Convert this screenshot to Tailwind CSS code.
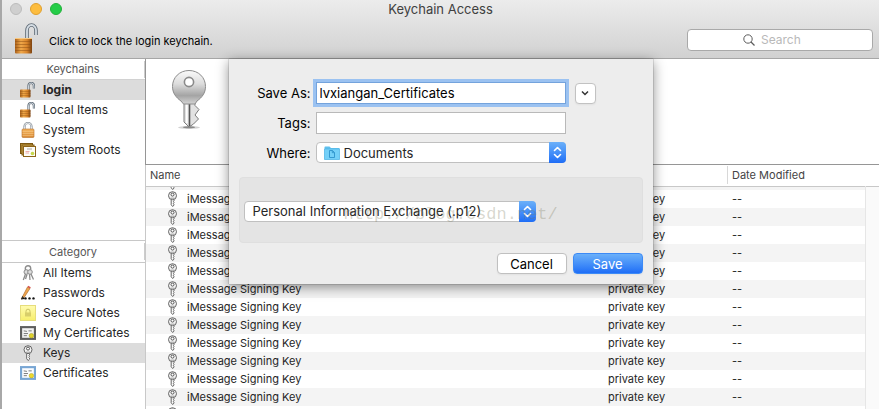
<!DOCTYPE html>
<html lang="en">

<head>
    <meta charset="UTF-8" />
    <meta name="viewport" content="width=device-width, initial-scale=1.0" />
    <title>Keychain Access</title>
    <script src="https://cdn.jsdelivr.net/npm/@tailwindcss/browser@4"></script>
</head>

<body class="h-screen overflow-hidden bg-[#a8a8a8] pl-[2px] font-['Inter','Liberation_Sans',sans-serif] text-[#262626]">

    <!-- shared icons -->
    <svg class="absolute size-0" xmlns="http://www.w3.org/2000/svg" aria-hidden="true">
        <defs>
            <linearGradient id="brass" x1="0" x2="1" y1="0" y2="0">
                <stop offset="0" stop-color="#a9601a" />
                <stop offset=".35" stop-color="#f0a84a" />
                <stop offset=".7" stop-color="#d9852b" />
                <stop offset="1" stop-color="#7c420f" />
            </linearGradient>
            <linearGradient id="gold" x1="0" x2="0" y1="0" y2="1">
                <stop offset="0" stop-color="#f3b55f" />
                <stop offset="1" stop-color="#d98a35" />
            </linearGradient>
            <linearGradient id="silver" x1="0" x2="0" y1="0" y2="1">
                <stop offset="0" stop-color="#fafafa" />
                <stop offset=".4" stop-color="#dcdcdc" />
                <stop offset=".75" stop-color="#a4a4a4" />
                <stop offset="1" stop-color="#d4d4d4" />
            </linearGradient>
            <linearGradient id="note" x1="0" x2="0" y1="0" y2="1">
                <stop offset="0" stop-color="#fffbb0" />
                <stop offset="1" stop-color="#f7ee6c" />
            </linearGradient>
        </defs>

        <symbol id="lock-open" viewBox="0 0 24 32">
            <path d="M13 17V8.500a4.500 5.500 0 0 1 9 0V13" fill="none" stroke="#5f6b76" stroke-width="3.600" />
            <path d="M13 17V8.500a4.500 5.500 0 0 1 9 0V13" fill="none" stroke="#d5dde4" stroke-width="1.800" />
            <rect x="1" y="16" width="17" height="15.500" rx="1" fill="url(#brass)" />
            <path d="M1 19.500h17M1 22.500h17M1 25.500h17M1 28.500h17" stroke="#8a4c12" stroke-opacity=".55" stroke-width=".9" />
            <path d="M1 16.500h17" stroke="#f8c880" stroke-width="1" />
        </symbol>

        <symbol id="lock-open-small" viewBox="0 0 16 16">
            <path d="M8.500 8V4a2.700 3 0 0 1 5.400 0V6.500" fill="none" stroke="#5f6b76" stroke-width="2.200" />
            <path d="M8.500 8V4a2.700 3 0 0 1 5.400 0V6.500" fill="none" stroke="#d5dde4" stroke-width=".9" />
            <rect x="0" y="7.500" width="10.500" height="8" rx=".8" fill="url(#brass)" />
            <path d="M0 9.500h10.500M0 11.500h10.500M0 13.500h10.500" stroke="#8a4c12" stroke-opacity=".5" stroke-width=".7" />
        </symbol>

        <symbol id="lock-closed" viewBox="0 0 14 16">
            <path d="M3.500 8V4.500a3.500 3.500 0 0 1 7 0V8" fill="none" stroke="#8a929a" stroke-width="2.200" />
            <path d="M3.500 8V4.500a3.500 3.500 0 0 1 7 0V8" fill="none" stroke="#e4e8ec" stroke-width="1" />
            <rect x="1" y="7" width="12" height="8.500" rx="1" fill="url(#gold)" stroke="#b97128" stroke-width=".6" />
            <path d="M1.500 9.500h11M1.500 11.500h11M1.500 13.500h11" stroke="#f8cf8e" stroke-opacity=".7" stroke-width=".7" />
        </symbol>

        <symbol id="roots" viewBox="0 0 16 14">
            <rect x=".5" y=".5" width="12" height="10" fill="#c79a3a" stroke="#7d5813" />
            <rect x="2" y="2" width="12" height="10" fill="#d9b158" stroke="#7d5813" />
            <rect x="3.500" y="3.500" width="12" height="10" fill="#fdfcf6" stroke="#8d641a" />
            <path d="M7 6h5" stroke="#888" stroke-width=".7" />
            <path d="M5.500 8.500h4M5.500 10h3.500" stroke="#e79a9a" stroke-width=".8" />
            <circle cx="12.500" cy="10.500" r="1.800" fill="#c6d84a" />
        </symbol>

        <symbol id="key" viewBox="0 0 9 16">
            <path d="M3.200 8.500v5.200L4.600 15.500 6 14.200v-1l-.8-.8.800-.9-.6-.8.600-.8V8.500" fill="#fff" stroke="#555" stroke-width=".9" />
            <circle cx="4.500" cy="4.700" r="4" fill="#f4f4f4" stroke="#555" stroke-width=".9" />
            <circle cx="4.500" cy="3.600" r="1.500" fill="#fff" stroke="#444" stroke-width=".9" />
            <path d="M2.500 7.200h4" stroke="#888" stroke-width=".8" />
        </symbol>

        <symbol id="big-key" viewBox="0 0 36 62">
            <ellipse cx="18" cy="58.500" rx="11" ry="1.500" fill="#000" fill-opacity=".18" />
            <ellipse cx="18" cy="58.300" rx="6" ry="1" fill="#000" fill-opacity=".35" />
            <path d="M13 31v22l5 5 4.500-3 5-5-3.500-4 4-5.500-4-4V31z" fill="#e2e2e2" stroke="#7c7c7c" />
            <path d="M18.500 33v24" stroke="#555" stroke-width="1.600" />
            <path d="M15.800 33v21" stroke="#fff" stroke-width="1.600" />
            <path d="M18 1.500c9.500 0 16.500 7 16.500 16 0 6.500-3.500 11-8.500 14.500l-2 3H12.500l-2.500-3C5 28.500 1.500 24 1.500 17.500c0-9 7-16 16.500-16z"
                fill="url(#silver)" stroke="#8c8c8c" />
            <circle cx="18" cy="13" r="4.600" fill="#fff" stroke="#8a8a8a" stroke-width="1.600" />
        </symbol>

        <symbol id="keys" viewBox="0 0 13 16">
            <g fill="none" stroke="#8c8c8c">
                <circle cx="6.500" cy="3.500" r="2.700" stroke-width="1.400" />
                <circle cx="4.800" cy="7" r="2.300" fill="#ddd" />
                <circle cx="8.500" cy="7" r="2.300" fill="#ddd" />
                <path d="M4 9l-2.200 6M5.500 9.500L4 14M8 9.300l.5 5.700M9.500 9l2.500 5.500" stroke-width="1.300" />
            </g>
        </symbol>

        <symbol id="pencil" viewBox="0 0 16 15">
            <path d="M1.500 13L7.500 1.500 10 3 4 12.200z" fill="#f0a54e" stroke="#a05f24" stroke-width=".6" />
            <path d="M7.500 1.500L8.300.3l2.500 1.400L10 3z" fill="#d8504a" />
            <path d="M1.500 13l.6-2.600 2 1.700z" fill="#333" />
            <path d="M1 13.500l3.500-.7" stroke="#111" stroke-width="1.200" />
            <circle cx="5.500" cy="12.900" r="1.200" fill="#111" />
            <circle cx="9.500" cy="12.900" r="1.200" fill="#111" />
            <circle cx="13.500" cy="12.900" r="1.200" fill="#111" />
        </symbol>

        <symbol id="secure-note" viewBox="0 0 16 16">
            <rect x=".5" y=".5" width="15" height="15" fill="url(#note)" stroke="#e6dd7c" />
            <path d="M6 8V6.200a2 2 0 0 1 4 0V8" fill="none" stroke="#cdc468" />
            <rect x="5" y="7.500" width="6" height="4" fill="#d8ce6a" />
        </symbol>

        <symbol id="cert-dark" viewBox="0 0 15 13">
            <rect x="1" y="1" width="13" height="11" fill="#f2f2f2" stroke="#5e5e5e" stroke-width="2" />
            <path d="M3.500 4.500l3 .5M8 4.500h3M3.500 7h4M3.500 9h3" stroke="#777" stroke-width=".9" />
            <circle cx="10.700" cy="9" r="2.100" fill="#dfd22c" stroke="#a89a18" stroke-width=".5" />
        </symbol>

        <symbol id="cert-blue" viewBox="0 0 15 13">
            <rect x="1" y="1" width="13" height="11" fill="#fafcfe" stroke="#78a6d4" stroke-width="2" />
            <path d="M3.500 4.500l3 .5M8 4.500h3M3.500 7h4M3.500 9h3" stroke="#777" stroke-width=".9" />
            <circle cx="10.700" cy="9" r="2.100" fill="#ecd92c" stroke="#b5a51c" stroke-width=".5" />
        </symbol>

        <symbol id="folder" viewBox="0 0 16 14">
            <path d="M.5 1.200Q.5.500 1.200.5H5.500L7 2h8.500v11.500H.5z" fill="#5fc0ee" />
            <path d="M.5 3h15v10.500H.5z" fill="#74d0f8" stroke="#4fb2e2" stroke-width=".6" />
            <path d="M5.500 4.500h3l2 2V11.500h-5zM8.300 4.700v2h2" fill="none" stroke="#2e93cb" stroke-width=".9" />
        </symbol>

        <symbol id="updown" viewBox="0 0 17 21">
            <path d="M5.500 8.500l3-3 3 3M5.500 12.500l3 3 3-3" fill="none" stroke="#fff" stroke-width="1.600" stroke-linecap="round" stroke-linejoin="round" />
        </symbol>
    </svg>

    <div class="flex h-full flex-col bg-white">

        <!-- title bar -->
        <header class="shrink-0 border-b border-[#a6a6a6] bg-linear-to-b from-[#ececec] to-[#d1d1d1]">
            <div class="grid h-[18px] grid-cols-[1fr_auto_1fr] items-center px-2">
                <div class="flex gap-2">
                    <button aria-label="Close" class="size-3 rounded-full border border-[#bcbcbc] bg-[#cfcfcf]"></button>
                    <button aria-label="Minimize" class="size-3 rounded-full border border-[#e0a02f] bg-[#fdbd3f]"></button>
                    <button aria-label="Zoom" class="size-3 rounded-full border border-[#22b13a] bg-[#24cd48]"></button>
                </div>
                <h1 class="text-[13px] leading-4 text-[#404040]">Keychain Access</h1>
            </div>
            <div class="flex h-10 items-start justify-between pr-[6px] pl-3">
                <div class="flex items-center pt-1">
                    <button aria-label="Lock keychain"><svg class="h-8 w-6"><use href="#lock-open" /></svg></button>
                    <p class="ml-[11px] pt-[6px] text-[11px] leading-4 text-black">Click to lock the login keychain.</p>
                </div>
                <label class="mt-[11px] flex h-[22px] w-[186px] items-center gap-[6px] rounded border border-[#a9a9a9] bg-white pl-[55px]">
                    <svg class="size-3 shrink-0" viewBox="0 0 12 12" fill="none" stroke="#5c5c5c">
                        <circle cx="5" cy="5" r="4.200" />
                        <path d="M8 8l3.500 3.500" stroke-width="1.300" />
                    </svg>
                    <input type="search" aria-label="Search" placeholder="Search"
                        class="w-full min-w-0 text-xs outline-none placeholder:text-[#b9b9b9]" />
                </label>
            </div>
        </header>

        <div class="relative flex min-h-0 flex-1">

            <!-- sidebar -->
            <nav class="flex w-[143px] shrink-0 flex-col text-[12px] leading-5">
                <section class="h-[181px]">
                    <div class="flex h-[21px] items-center border-b border-[#d2d2d2]">
                        <h2 class="flex-1 text-center text-[11px] text-[#555]">Keychains</h2>
                        <span class="h-[17px] w-px bg-[#ccc]"></span>
                    </div>
                    <ul>
                        <li><a href="#" class="flex h-5 items-center bg-[#dcdcdc] font-bold"><span class="flex w-[41px] justify-center pl-[10px]"><svg class="size-4"><use href="#lock-open-small" /></svg></span>login</a></li>
                        <li><a href="#" class="flex h-5 items-center"><span class="flex w-[41px] justify-center pl-[10px]"><svg class="size-4"><use href="#lock-open-small" /></svg></span>Local Items</a></li>
                        <li><a href="#" class="flex h-5 items-center"><span class="flex w-[41px] justify-center pl-[10px]"><svg class="size-4"><use href="#lock-closed" /></svg></span>System</a></li>
                        <li><a href="#" class="flex h-5 items-center"><span class="flex w-[41px] justify-center pl-[10px]"><svg class="size-4"><use href="#roots" /></svg></span>System Roots</a></li>
                    </ul>
                </section>
                <section class="flex-1 border-t border-[#c8c8c8]">
                    <div class="flex h-[22px] items-center border-b border-[#c8c8c8]">
                        <h2 class="flex-1 text-center text-[11px] text-[#555]">Category</h2>
                        <span class="h-[17px] w-px bg-[#ccc]"></span>
                    </div>
                    <ul>
                        <li><a href="#" class="flex h-5 items-center"><span class="flex w-[41px] justify-center pl-[10px]"><svg class="size-4"><use href="#keys" /></svg></span>All Items</a></li>
                        <li><a href="#" class="flex h-5 items-center"><span class="flex w-[41px] justify-center pl-[10px]"><svg class="size-4"><use href="#pencil" /></svg></span>Passwords</a></li>
                        <li><a href="#" class="flex h-5 items-center"><span class="flex w-[41px] justify-center pl-[10px]"><svg class="size-4"><use href="#secure-note" /></svg></span>Secure Notes</a></li>
                        <li><a href="#" class="flex h-5 items-center"><span class="flex w-[41px] justify-center pl-[10px]"><svg class="size-4"><use href="#cert-dark" /></svg></span>My Certificates</a></li>
                        <li><a href="#" class="flex h-5 items-center bg-[#dcdcdc]"><span class="flex w-[41px] justify-center pl-[10px]"><svg class="size-4"><use href="#key" /></svg></span>Keys</a></li>
                        <li><a href="#" class="flex h-5 items-center"><span class="flex w-[41px] justify-center pl-[10px]"><svg class="size-4"><use href="#cert-blue" /></svg></span>Certificates</a></li>
                    </ul>
                </section>
            </nav>

            <!-- item list -->
            <main class="flex min-w-0 flex-1 flex-col">
                <div class="h-[106px] shrink-0 border-b border-l border-[#969696] pt-[10px] pl-[25px]">
                    <svg class="h-[62px] w-9"><use href="#big-key" /></svg>
                </div>
                <div class="min-h-0 flex-1 overflow-hidden border-l border-[#c8c8c8]">
                    <table class="w-full table-fixed text-left text-[11px] leading-[18px]">
                        <colgroup>
                            <col />
                            <col class="w-[125px]" />
                            <col class="w-[138px]" />
                            <col class="w-[14px]" />
                        </colgroup>
                        <thead class="text-[#444]">
                            <tr class="h-[21px] border-b border-[#c8c8c8]">
                                <th class="pl-1 font-normal">Name</th>
                                <th class="pl-[6px] font-normal">Kind</th>
                                <th colspan="2" class="font-normal"><span class="block border-l border-[#d8d8d8] pl-1">Date Modified</span></th>
                            </tr>
                        </thead>
                        <tbody id="items">
                            <tr class="bg-[#f4f4f4]">
                                <td class="pl-[22px]"><div class="flex h-[3px] items-end overflow-hidden"><svg class="h-4 w-[9px] shrink-0"><use href="#key" /></svg></div></td>
                                <td></td>
                                <td></td>
                                <td class="border-l border-[#e6e6e6] bg-[#fafafa]"></td>
                            </tr>
                        </tbody>
                    </table>
                </div>
            </main>

            <!-- save sheet -->
            <div class="pointer-events-none absolute inset-x-0 top-0 flex justify-center">
                <form class="pointer-events-auto w-[424px] bg-[#ededed] px-[10px] pt-[23px] pb-[10px] text-[13px] text-black shadow-[0_3px_12px_rgba(0,0,0,0.45),0_0_1px_rgba(0,0,0,0.6)]">
                    <div class="grid grid-cols-[72px_250px_auto] items-center gap-x-[5px] gap-y-2 leading-4">
                        <label for="save-as" class="text-right">Save As:</label>
                        <input id="save-as" type="text" value="lvxiangan_Certificates"
                            class="h-[22px] border border-[#74a3dc] bg-white px-[3px] ring-3 ring-[#9bc2f1] outline-none" />
                        <button type="button" aria-label="Show more" class="ml-1 flex size-[21px] items-center justify-center rounded border border-[#c2c2c2] bg-white shadow-xs">
                            <svg class="size-2" viewBox="0 0 8 8" fill="none" stroke="#333" stroke-width="1.500"><path d="M1 2.500l3 3 3-3" /></svg>
                        </button>

                        <label for="tags" class="text-right">Tags:</label>
                        <input id="tags" type="text" class="col-span-2 h-[22px] w-[250px] border border-[#b9b9b9] bg-white px-[3px]" />

                        <label for="where" class="text-right">Where:</label>
                        <div class="relative col-span-2 w-[250px]">
                            <select id="where" class="block h-[21px] w-full appearance-none rounded border border-[#c0c0c0] bg-white pl-[27px] text-[#262626]">
                                <option>Documents</option>
                            </select>
                            <svg class="pointer-events-none absolute top-1 left-2 h-[14px] w-4"><use href="#folder" /></svg>
                            <span class="pointer-events-none absolute top-0 right-0 rounded-r bg-linear-to-b from-[#6bb0f9] to-[#1f6df6]">
                                <svg class="h-[21px] w-[17px]"><use href="#updown" /></svg>
                            </span>
                        </div>
                    </div>

                    <div class="relative mt-[14px] h-[66px] rounded border border-[#dfdfdf] bg-[#e4e4e4] px-1 pt-[23px]">
                        <div class="relative w-[292px]">
                            <select aria-label="File format" class="block h-[21px] w-full appearance-none rounded border border-[#c0c0c0] bg-white pl-2 text-[#262626]">
                                <option>Personal Information Exchange (.p12)</option>
                            </select>
                            <span class="pointer-events-none absolute top-0 right-0 rounded-r bg-linear-to-b from-[#6bb0f9] to-[#1f6df6]">
                                <svg class="h-[21px] w-[17px]"><use href="#updown" /></svg>
                            </span>
                        </div>
                        <span class="pointer-events-none absolute top-[27px] left-[104px] font-['Liberation_Mono',monospace] text-[17px] leading-5 text-[#78785a]/30">http://blog.csdn.net/</span>
                    </div>

                    <div class="mt-[10px] flex justify-end gap-[6px]">
                        <button type="button" class="h-[21px] w-[70px] rounded border border-[#c0c0c0] bg-white leading-4 shadow-xs">Cancel</button>
                        <button type="submit" class="h-[21px] w-[70px] rounded border border-[#3c8af6] bg-linear-to-b from-[#6bb0f9] to-[#1f6df6] leading-4 text-white shadow-xs">Save</button>
                    </div>
                </form>
            </div>
        </div>
    </div>

    <script>
        const items = document.getElementById("items");

        for (let i = 0; i < 13; i++) {
            const row = document.createElement("tr");
            row.className = "h-[18px] odd:bg-[#f4f4f4]";
            row.innerHTML = `
                <td class="pl-[22px]"><div class="flex h-[18px] items-center gap-[10px]"><svg class="h-4 w-[9px] shrink-0"><use href="#key" /></svg>iMessage Signing Key</div></td>
                <td class="pl-[6px]">private key</td>
                <td class="pl-[5px]">--</td>
                <td class="border-l border-[#e6e6e6] bg-[#fafafa]"></td>`;
            items.appendChild(row);
        }
    </script>

</body>

</html>
